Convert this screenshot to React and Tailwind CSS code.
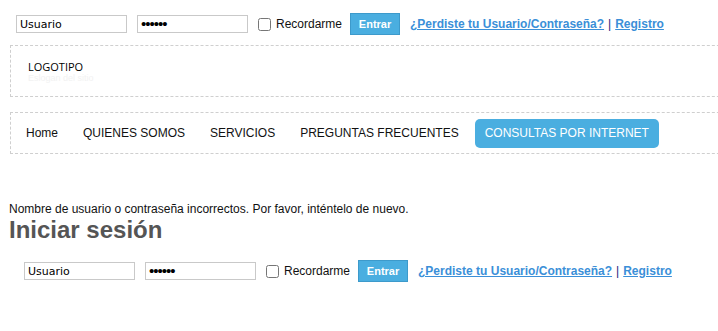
import React from 'react';

function LoginRow({ className }) {
  return (
    <div className={`flex items-center h-[22px] ${className}`}>
      <input
        readOnly
        defaultValue="Usuario"
        className="w-[111px] h-[18px] border border-[#c9c9c9] px-[3px] text-[11px] text-black outline-none"
        style={{ fontFamily: '"DejaVu Sans", sans-serif' }}
      />
      <input
        readOnly
        type="password"
        defaultValue="123456"
        className="ml-[10px] w-[111px] h-[18px] border border-[#c9c9c9] px-[3px] text-[15px] tracking-[-1px] text-black outline-none"
      />
      <input type="checkbox" className="ml-[10px] w-[13px] h-[13px]" />
      <span className="ml-[5px] text-[12px] text-[#111]">Recordarme</span>
      <button className="ml-[8px] w-[50px] h-[22px] bg-[#4aaee0] border border-[#3d9acb] text-white text-[11px] font-bold">
        Entrar
      </button>
      <a href="#" className="ml-[10px] text-[12px] font-bold text-[#3b8fd8] underline">
        ¿Perdiste tu Usuario/Contraseña?
      </a>
      <span className="mx-[4px] text-[12px] text-[#1a237e]">|</span>
      <a href="#" className="text-[12px] font-bold text-[#3b8fd8] underline">
        Registro
      </a>
    </div>
  );
}

export default function App() {
  const menu = ['Home', 'QUIENES SOMOS', 'SERVICIOS', 'PREGUNTAS FRECUENTES'];
  return (
    <div
      className="w-[718px] h-[331px] overflow-hidden bg-white text-black"
      style={{ fontFamily: '"Liberation Sans", Arial, sans-serif' }}
    >
      <LoginRow className="mt-[13px] pl-[16px]" />

      {/* Logo */}
      <div className="mt-[10px] ml-[10px] w-[760px] h-[52px] border border-dashed border-[#cfcfcf] pl-[17px] pt-[14px]">
        <div className="text-[11px] leading-[14px] text-black" style={{ fontFamily: '"Open Sans", sans-serif' }}>
          LOGOTIPO
        </div>
        <div className="text-[9px] leading-[9px] text-[#f2f2f2]">Eslogan del sitio</div>
      </div>

      {/* Menu */}
      <div className="mt-[15px] ml-[10px] w-[760px] h-[42px] border border-dashed border-[#cfcfcf] flex items-center pl-[15px]">
        {menu.map(m => (
          <span key={m} className="mr-[25px] text-[12px] text-[#111]">{m}</span>
        ))}
        <span className="-ml-[9px] h-[29px] px-[10px] flex items-center rounded-[5px] bg-[#4aaee0] text-white text-[12px]">
          CONSULTAS POR INTERNET
        </span>
      </div>

      <div className="mt-[48px] ml-[9px] text-[12px] leading-[14px] text-[#111]">
        Nombre de usuario o contraseña incorrectos. Por favor, inténtelo de nuevo.
      </div>
      <h1 className="ml-[9px] text-[24px] leading-[28px] font-bold text-[#555]">Iniciar sesión</h1>

      <LoginRow className="mt-[16px] pl-[24px]" />
    </div>
  );
}
